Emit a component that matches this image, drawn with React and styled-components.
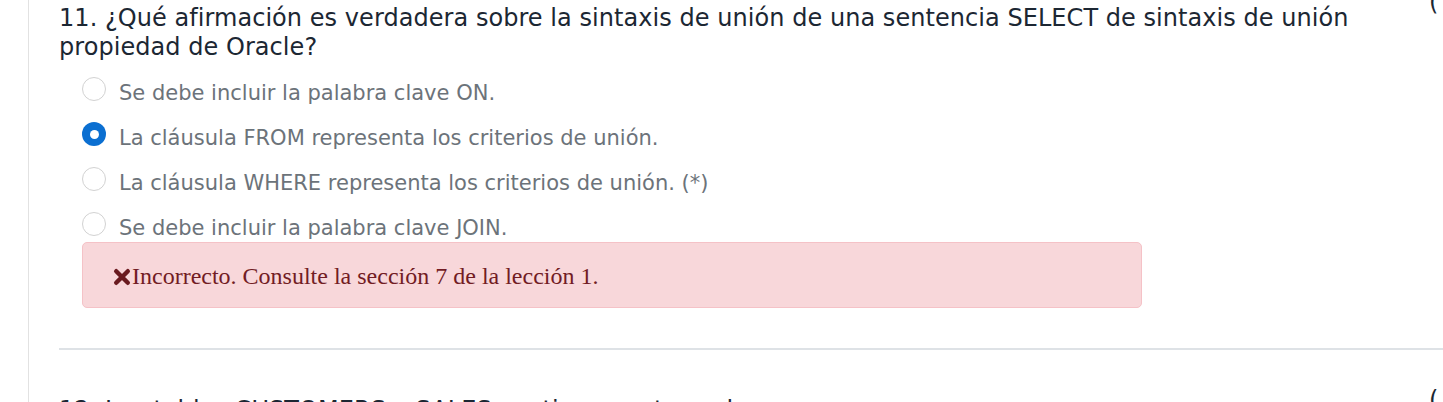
import React from "react";
import styled, { createGlobalStyle } from "styled-components";

const GlobalStyle = createGlobalStyle`
  html, body {
    margin: 0;
    padding: 0;
    background: #fff;
    overflow: hidden;
  }
  body {
    font-family: "DejaVu Sans", Verdana, sans-serif;
  }
`;

const Page = styled.div`
  width: 1443px;
  height: 402px;
  overflow: hidden;
  padding-left: 28px;
  box-sizing: border-box;
`;

const Panel = styled.div`
  border-left: 1px solid #e2e2e2;
  height: 100%;
  padding-left: 30px;
  box-sizing: border-box;
`;

const QuestionRow = styled.div`
  display: flex;
  align-items: flex-start;
`;

const QuestionBody = styled.div`
  flex: 1;
  min-width: 0;
`;

const Score = styled.div`
  width: 14px;
  flex-shrink: 0;
  margin-top: ${({ top }) => top}px;
  font-size: 24px;
  line-height: 29px;
  color: #1c2733;
  white-space: nowrap;
`;

const Title = styled.div`
  font-size: 24px;
  line-height: 29px;
  color: #1c2733;
  letter-spacing: 0.05px;
  padding-top: ${({ top }) => top}px;
`;

const Options = styled.div`
  display: flex;
  flex-direction: column;
  gap: 21px;
  padding: 15px 0 0 23px;
`;

const Option = styled.label`
  display: flex;
  align-items: center;
  gap: 13px;
  height: 24px;
  font-size: 21px;
  color: #6c737a;
  white-space: nowrap;
`;

const OptionText = styled.span`
  padding-top: 8px;
`;

const Radio = styled.span`
  width: 24px;
  height: 24px;
  box-sizing: border-box;
  border-radius: 50%;
  flex-shrink: 0;
  border: ${({ checked }) => (checked ? "none" : "1px solid #d2d2d2")};
  background: ${({ checked }) => (checked ? "#0b6fd1" : "#fff")};
  display: flex;
  align-items: center;
  justify-content: center;

  &::after {
    content: "";
    display: ${({ checked }) => (checked ? "block" : "none")};
    width: 9px;
    height: 9px;
    border-radius: 50%;
    background: #fff;
  }
`;

const Alert = styled.div`
  margin: 6px 0 0 23px;
  width: 1060px;
  height: 66px;
  box-sizing: border-box;
  background: #f8d7da;
  border: 1px solid #f5c2c7;
  border-radius: 5px;
  display: flex;
  align-items: center;
  padding: 3px 0 0 30px;
  font-family: "Liberation Serif", "Times New Roman", serif;
  font-size: 24px;
  color: #721c24;
`;

const Divider = styled.hr`
  border: none;
  height: 2px;
  background: #dee2e6;
  margin: 40px 0 0 0;
`;

const CrossIcon = () => (
  <svg width="18" height="18" viewBox="0 0 18 18" style={{ marginRight: 1 }}>
    <path d="M3.2 3.2 L14.8 14.8 M14.8 3.2 L3.2 14.8" stroke="#6a1a1f" strokeWidth="4.4" strokeLinecap="round" />
  </svg>
);

const options = [
  { text: "Se debe incluir la palabra clave ON.", checked: false },
  { text: "La cláusula FROM representa los criterios de unión.", checked: true },
  { text: "La cláusula WHERE representa los criterios de unión. (*)", checked: false },
  { text: "Se debe incluir la palabra clave JOIN.", checked: false },
];

export default function App() {
  return (
    <Page>
      <GlobalStyle />
      <Panel>
        <QuestionRow>
          <QuestionBody>
            <Title top={4}>
              11. ¿Qué afirmación es verdadera sobre la sintaxis de unión de una sentencia SELECT de sintaxis de unión propiedad de Oracle?
            </Title>
            <Options>
              {options.map((o, i) => (
                <Option key={i}>
                  <Radio checked={o.checked} />
                  <OptionText>{o.text}</OptionText>
                </Option>
              ))}
            </Options>
            <Alert>
              <CrossIcon />
              Incorrecto. Consulte la sección 7 de la lección 1.
            </Alert>
          </QuestionBody>
          <Score top={-12}>(</Score>
        </QuestionRow>
        <Divider />
        <QuestionRow>
          <QuestionBody>
            <Title top={46}>12. Las tablas CUSTOMERS y SALES contienen estas columnas:</Title>
          </QuestionBody>
          <Score top={36}>(</Score>
        </QuestionRow>
      </Panel>
    </Page>
  );
}
